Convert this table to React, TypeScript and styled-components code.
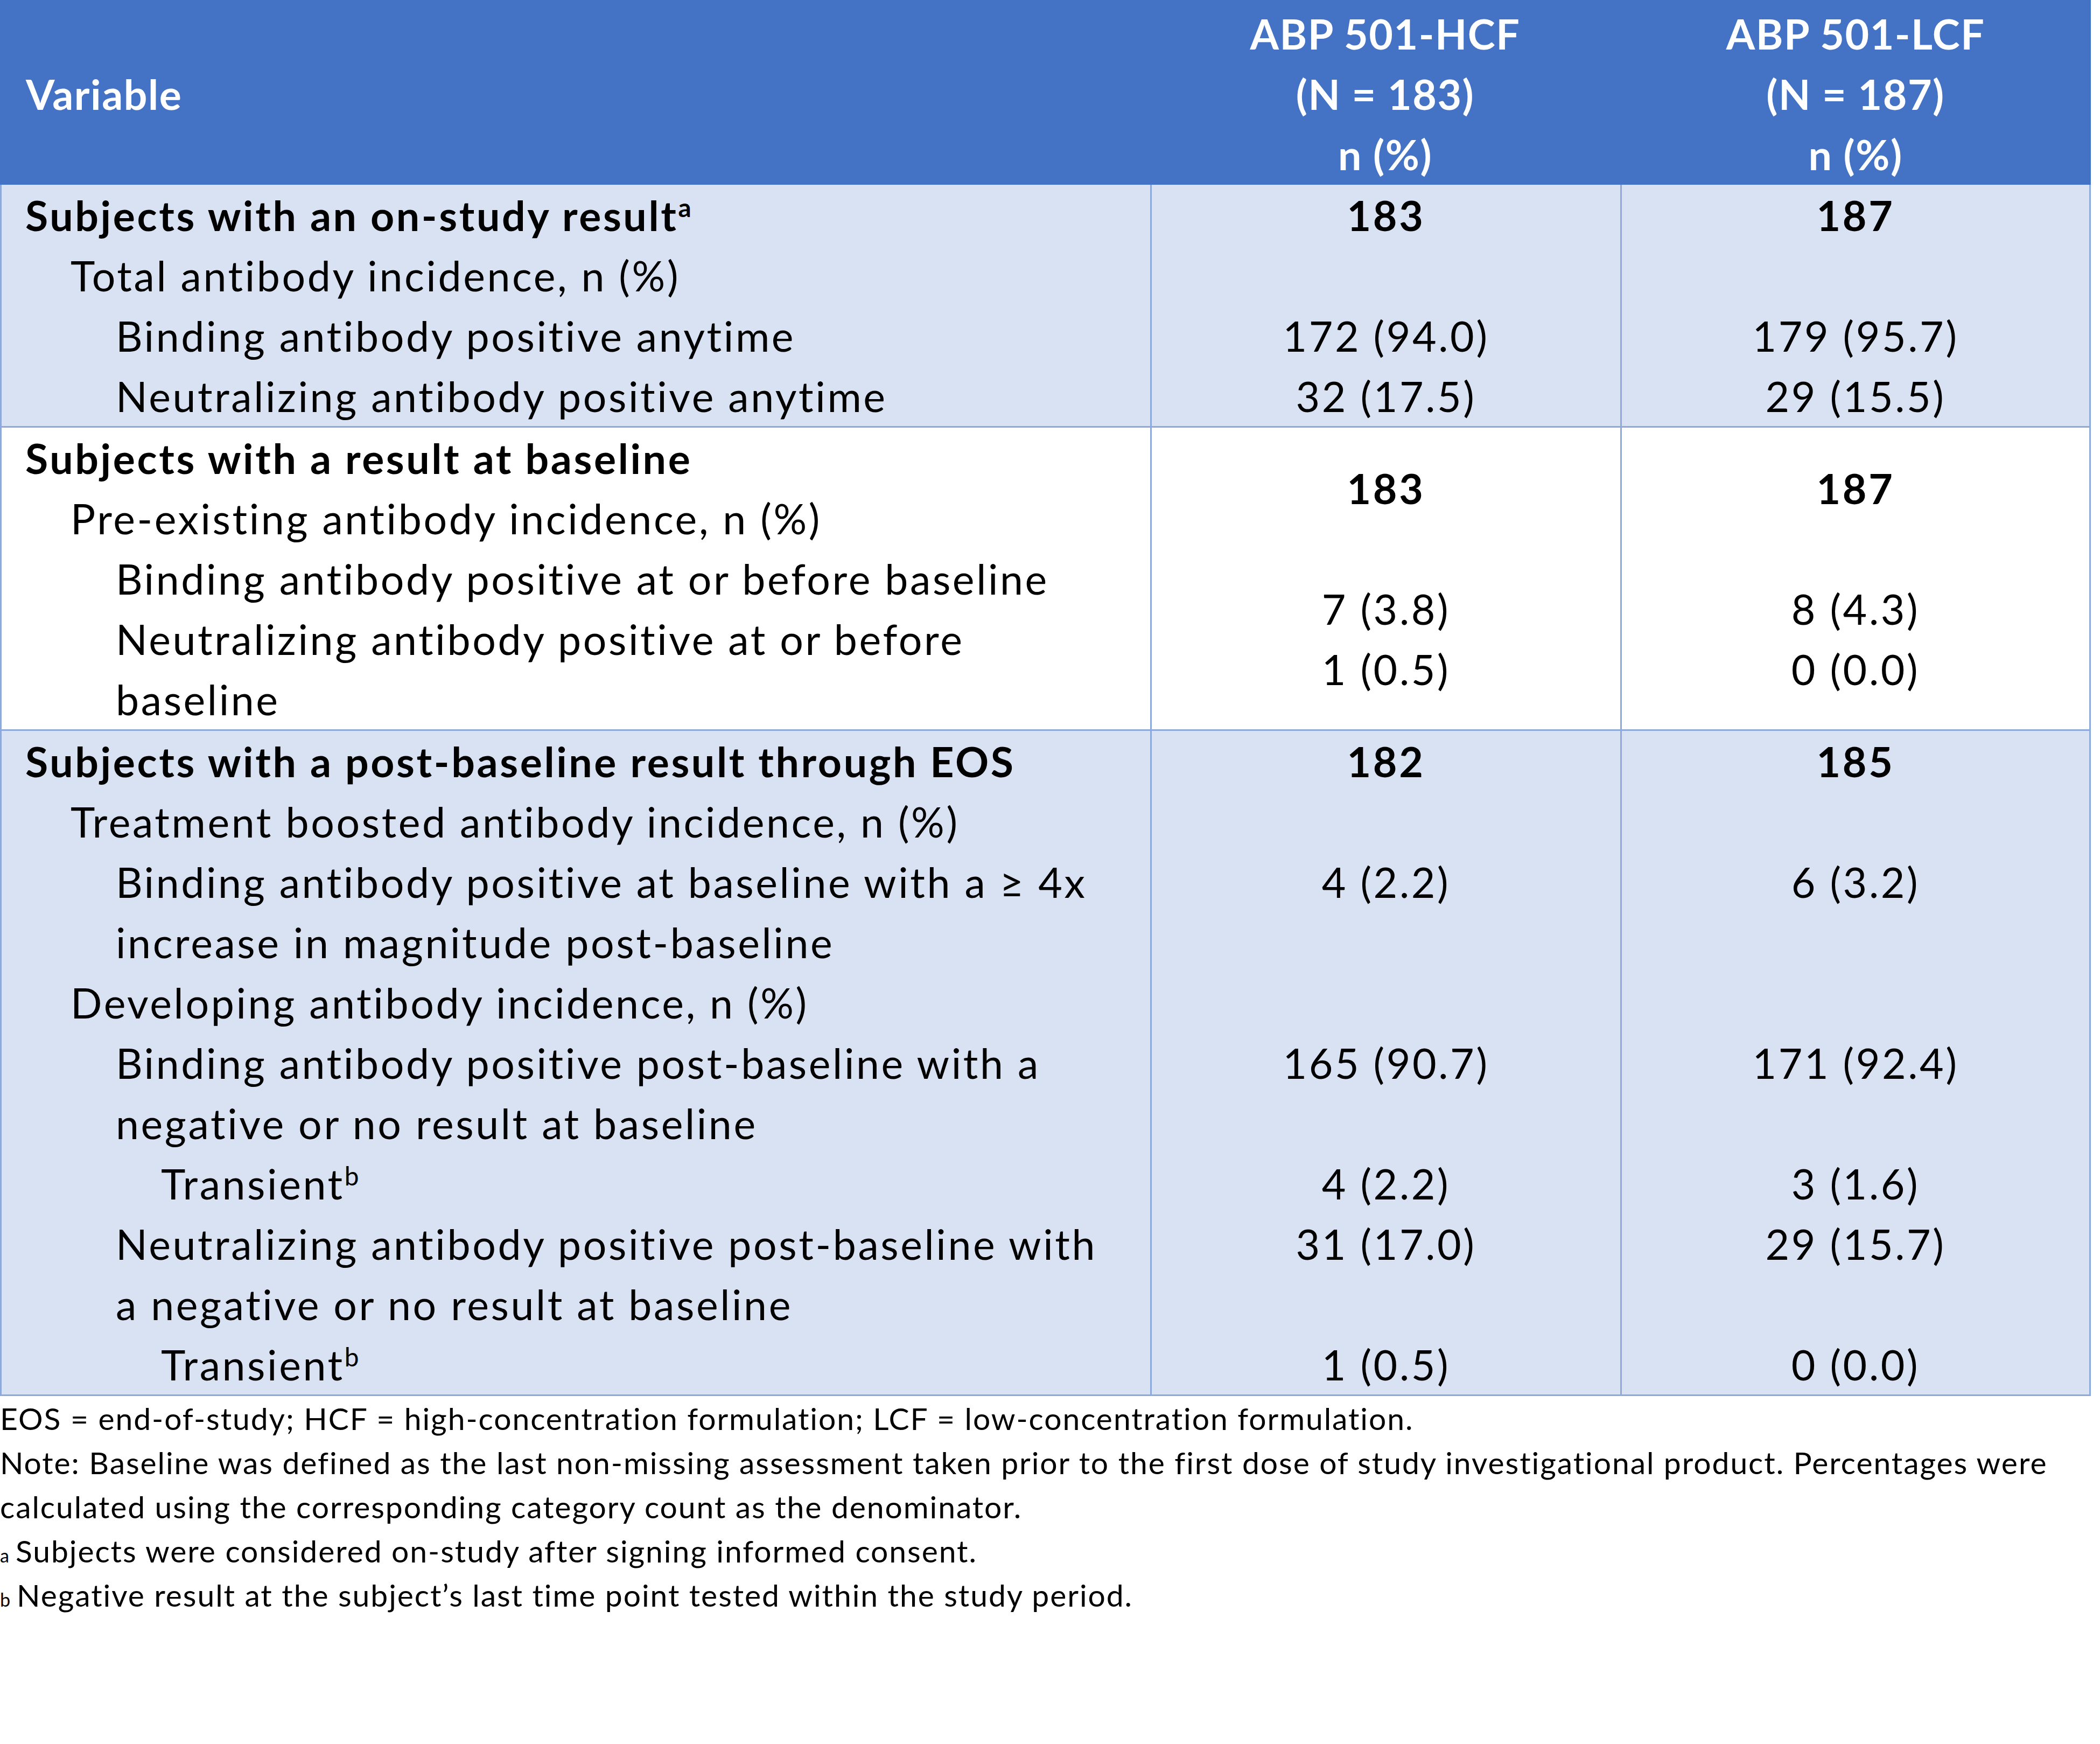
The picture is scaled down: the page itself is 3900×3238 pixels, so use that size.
import React from "react";
import styled, { createGlobalStyle } from "styled-components";

const GlobalStyle = createGlobalStyle`
  html, body {
    margin: 0;
    padding: 0;
    background: #ffffff;
  }
  body {
    font-family: "Lato", "Open Sans", sans-serif;
    color: #000000;
  }
`;

const BLUE = "#4472C4";
const BAND = "#D9E2F3";
const RULE = "#8EAADB";
const LINE = 112;
const FONT = 77;
const TRACK = "0.047em";

const Page = styled.div`
  width: 3883px;
  display: flex;
  flex-direction: column;
`;

const Table = styled.div`
  display: flex;
  flex-direction: column;
  width: 3883px;
`;

const Grid = styled.div`
  display: grid;
  grid-template-columns: 2136px 873px 874px;
  box-sizing: border-box;
  letter-spacing: ${TRACK};
`;

const HeaderRow = styled(Grid)`
  background: ${BLUE};
  color: #ffffff;
  font-weight: 700;
  font-size: ${FONT}px;
  line-height: ${LINE}px;
  height: 343px;
  padding: 6px 0 1px;
  letter-spacing: 0.02em;
`;

const HeaderLabel = styled.div`
  display: flex;
  align-items: center;
  padding-left: 48px;
`;

const HeaderValue = styled.div`
  display: flex;
  flex-direction: column;
  align-items: center;
  text-align: center;
  white-space: nowrap;
`;

const BodyRow = styled(Grid)<{ $band: boolean }>`
  background: ${(p) => (p.$band ? BAND : "#ffffff")};
  border-bottom: 3px solid ${RULE};
  font-size: ${FONT}px;
  line-height: ${LINE}px;
`;

const LabelCell = styled.div`
  box-sizing: border-box;
  border-left: 3px solid ${RULE};
  display: flex;
  flex-direction: column;
`;

const ValueCell = styled.div<{ $last?: boolean }>`
  box-sizing: border-box;
  border-left: 3px solid ${RULE};
  border-right: ${(p) => (p.$last ? `3px solid ${RULE}` : "none")};
  display: flex;
  flex-direction: column;
  justify-content: center;
  align-items: center;
`;

const LabelLine = styled.div<{ $level: number; $bold?: boolean }>`
  padding-left: ${(p) => 44 + p.$level * 84}px;
  font-weight: ${(p) => (p.$bold ? 700 : 400)};
  white-space: nowrap;
`;

const ValueLine = styled.div<{ $bold?: boolean }>`
  font-weight: ${(p) => (p.$bold ? 700 : 400)};
  white-space: nowrap;
  text-align: center;
  min-height: ${LINE}px;
`;

const Sup = styled.sup`
  font-size: 0.62em;
  line-height: 0;
  vertical-align: 0.55em;
  font-weight: inherit;
`;

const Notes = styled.div`
  display: flex;
  flex-direction: column;
  font-size: 57px;
  line-height: 82px;
  letter-spacing: 0.034em;
  white-space: nowrap;
`;

const NoteLine = styled.div`
  height: 82px;
`;

const NoteMark = styled.span`
  font-size: 0.6em;
  line-height: 1;
  margin-right: 10px;
`;

type Label = { level: number; bold?: boolean; lines: string[]; sup?: string };
type Value = { text: string; bold?: boolean };
type Section = { band: boolean; labels: Label[]; hcf: Value[]; lcf: Value[] };

const v = (text: string, bold = false): Value => ({ text, bold });

const sections: Section[] = [
  {
    band: true,
    labels: [
      { level: 0, bold: true, lines: ["Subjects with an on-study result"], sup: "a" },
      { level: 1, lines: ["Total antibody incidence, n (%)"] },
      { level: 2, lines: ["Binding antibody positive anytime"] },
      { level: 2, lines: ["Neutralizing antibody positive anytime"] },
    ],
    hcf: [v("183", true), v(""), v("172 (94.0)"), v("32 (17.5)")],
    lcf: [v("187", true), v(""), v("179 (95.7)"), v("29 (15.5)")],
  },
  {
    band: false,
    labels: [
      { level: 0, bold: true, lines: ["Subjects with a result at baseline"] },
      { level: 1, lines: ["Pre-existing antibody incidence, n (%)"] },
      { level: 2, lines: ["Binding antibody positive at or before baseline"] },
      { level: 2, lines: ["Neutralizing antibody positive at or before", "baseline"] },
    ],
    hcf: [v("183", true), v(""), v("7 (3.8)"), v("1 (0.5)")],
    lcf: [v("187", true), v(""), v("8 (4.3)"), v("0 (0.0)")],
  },
  {
    band: true,
    labels: [
      { level: 0, bold: true, lines: ["Subjects with a post-baseline result through EOS"] },
      { level: 1, lines: ["Treatment boosted antibody incidence, n (%)"] },
      {
        level: 2,
        lines: ["Binding antibody positive at baseline with a \u2265 4x", "increase in magnitude post-baseline"],
      },
      { level: 1, lines: ["Developing antibody incidence, n (%)"] },
      {
        level: 2,
        lines: ["Binding antibody positive post-baseline with a", "negative or no result at baseline"],
      },
      { level: 3, lines: ["Transient"], sup: "b" },
      {
        level: 2,
        lines: ["Neutralizing antibody positive post-baseline with", "a negative or no result at baseline"],
      },
      { level: 3, lines: ["Transient"], sup: "b" },
    ],
    hcf: [
      v("182", true),
      v(""),
      v("4 (2.2)"),
      v(""),
      v(""),
      v("165 (90.7)"),
      v(""),
      v("4 (2.2)"),
      v("31 (17.0)"),
      v(""),
      v("1 (0.5)"),
    ],
    lcf: [
      v("185", true),
      v(""),
      v("6 (3.2)"),
      v(""),
      v(""),
      v("171 (92.4)"),
      v(""),
      v("3 (1.6)"),
      v("29 (15.7)"),
      v(""),
      v("0 (0.0)"),
    ],
  },
];

const Values: React.FC<{ items: Value[]; last?: boolean }> = ({ items, last }) => (
  <ValueCell $last={last}>
    {items.map((it, i) => (
      <ValueLine key={i} $bold={it.bold}>
        {it.text || "\u00a0"}
      </ValueLine>
    ))}
  </ValueCell>
);

export default function App() {
  return (
    <>
      <GlobalStyle />
      <Page>
        <Table>
          <HeaderRow>
            <HeaderLabel>Variable</HeaderLabel>
            <HeaderValue>
              <div>ABP 501-HCF</div>
              <div>(N = 183)</div>
              <div>n (%)</div>
            </HeaderValue>
            <HeaderValue>
              <div>ABP 501-LCF</div>
              <div>(N = 187)</div>
              <div>n (%)</div>
            </HeaderValue>
          </HeaderRow>
          {sections.map((s, si) => (
            <BodyRow key={si} $band={s.band}>
              <LabelCell>
                {s.labels.map((l, li) => (
                  <LabelLine key={li} $level={l.level} $bold={l.bold}>
                    {l.lines.map((t, ti) => (
                      <React.Fragment key={ti}>
                        {ti > 0 && <br />}
                        {t}
                      </React.Fragment>
                    ))}
                    {l.sup && <Sup>{l.sup}</Sup>}
                  </LabelLine>
                ))}
              </LabelCell>
              <Values items={s.hcf} />
              <Values items={s.lcf} last />
            </BodyRow>
          ))}
        </Table>
        <Notes>
          <NoteLine>EOS = end-of-study; HCF = high-concentration formulation; LCF = low-concentration formulation.</NoteLine>
          <NoteLine>
            Note: Baseline was defined as the last non-missing assessment taken prior to the first dose of study
            investigational product. Percentages were
          </NoteLine>
          <NoteLine>calculated using the corresponding category count as the denominator.</NoteLine>
          <NoteLine>
            <NoteMark>a</NoteMark>Subjects were considered on-study after signing informed consent.
          </NoteLine>
          <NoteLine>
            <NoteMark>b</NoteMark>Negative result at the subject{"\u2019"}s last time point tested within the study
            period.
          </NoteLine>
        </Notes>
      </Page>
    </>
  );
}
